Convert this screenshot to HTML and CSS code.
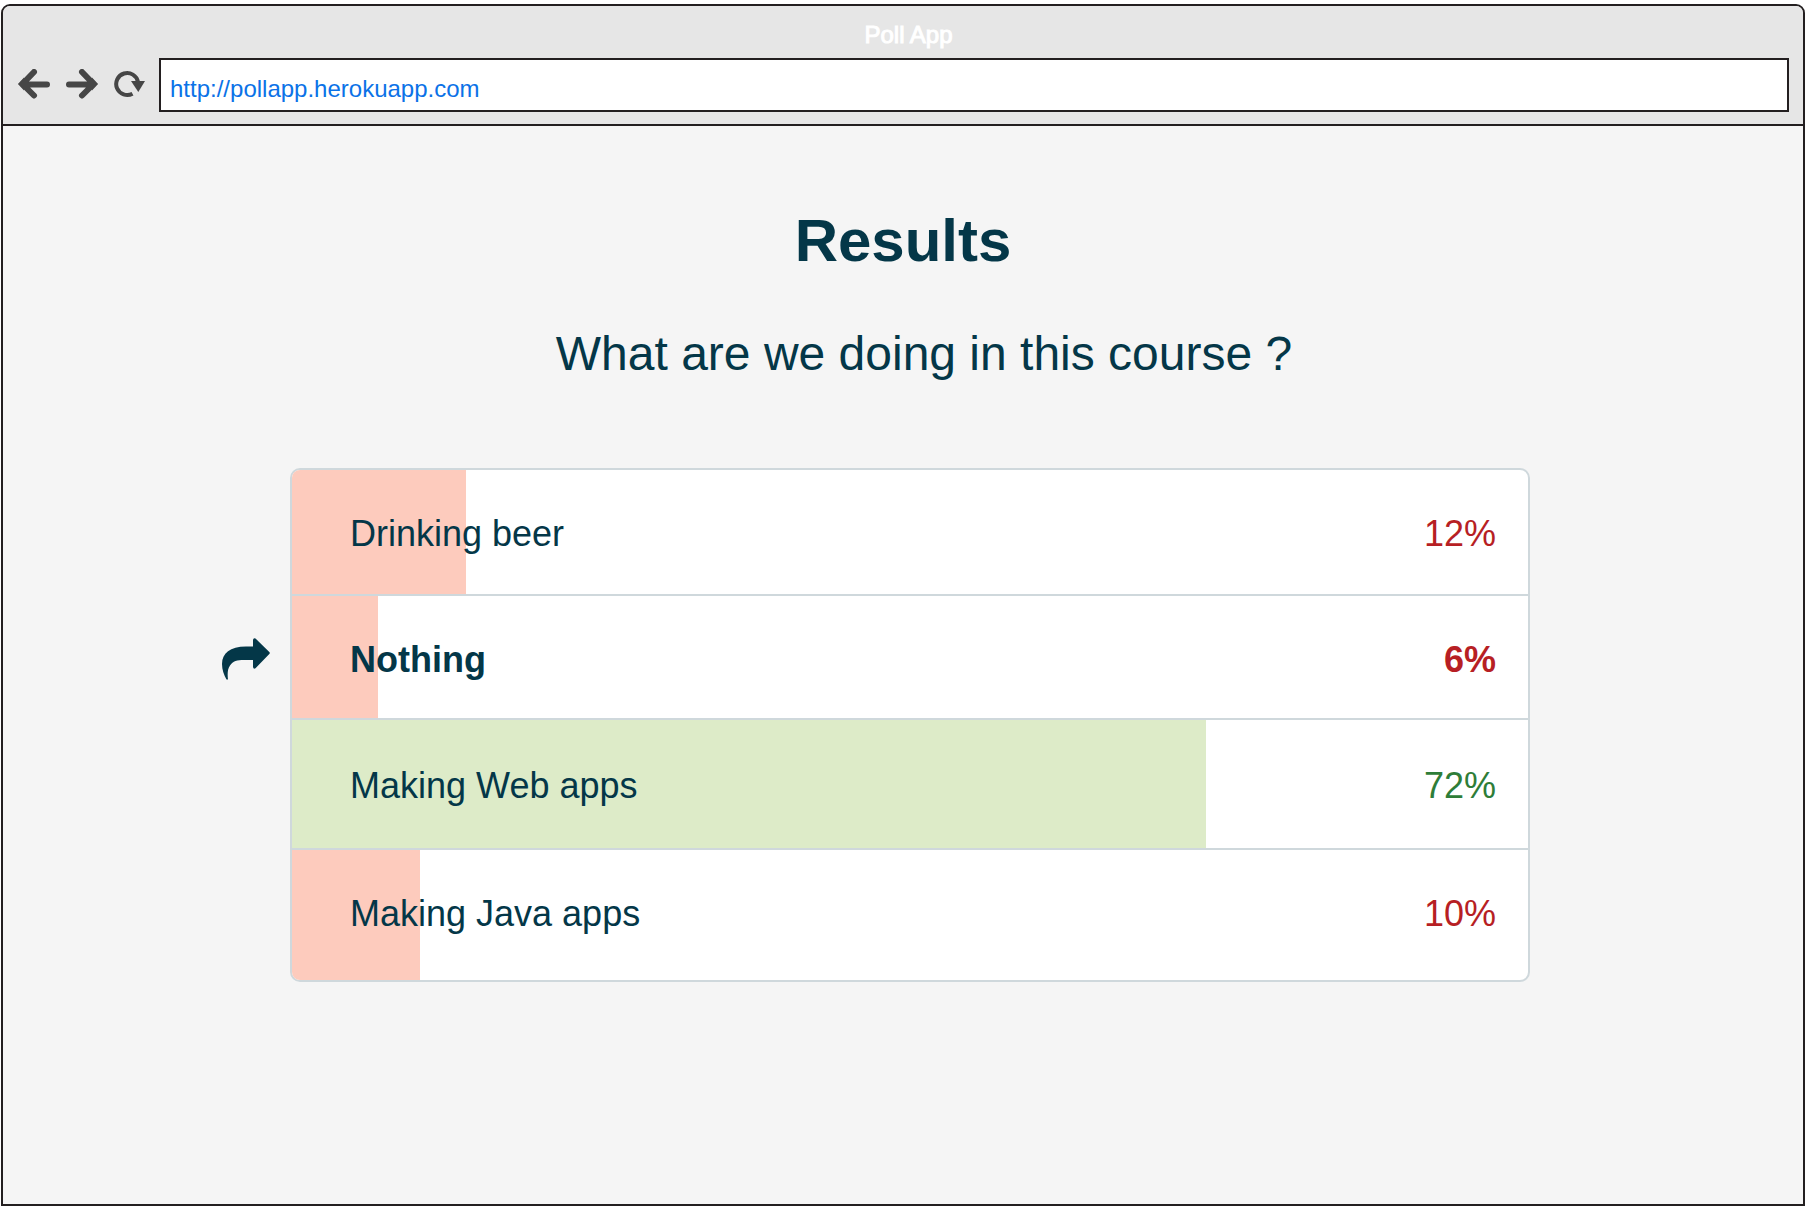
FILE: index.html
```html
<!DOCTYPE html>
<html lang="en">
<head>
<meta charset="utf-8">
<title>Poll App</title>
<link rel="stylesheet" href="styles.css">
</head>
<body>
<div class="window">
  <header class="chrome">
    <div class="window-title">Poll App</div>
    <div class="toolbar">
      <nav class="nav" aria-label="Browser">
        <button class="nav-button" type="button" aria-label="Back">
          <svg class="icon" viewBox="0 0 32 32"><path d="M8 15.500H29M16 3L4.500 15L16 26.500" fill="none" stroke="currentColor" stroke-width="6" stroke-linecap="round"/><path d="M0 15L6 8.500V21.500Z" fill="currentColor"/></svg>
        </button>
        <button class="nav-button" type="button" aria-label="Forward">
          <svg class="icon" viewBox="0 0 32 32"><path d="M24 15.500H3M16 3L27.500 15L16 26.500" fill="none" stroke="currentColor" stroke-width="6" stroke-linecap="round"/><path d="M32 15L26 8.500V21.500Z" fill="currentColor"/></svg>
        </button>
        <button class="nav-button" type="button" aria-label="Reload">
          <svg class="icon" viewBox="0 0 32 32"><path d="M24 13A11 11 0 1 0 18.500 24.700" fill="none" stroke="currentColor" stroke-width="4"/><path d="M17 12H31L24.300 23Z" fill="currentColor"/></svg>
        </button>
      </nav>
      <input class="address" type="text" aria-label="Address" value="http://pollapp.herokuapp.com">
    </div>
  </header>
  <main class="page">
    <h1 class="heading">Results</h1>
    <p class="question">What are we doing in this course ?</p>
    <ul class="results">
      <li class="result">
        <span class="bar" style="width: 14.08%"></span>
        <span class="label">Drinking beer</span>
        <span class="share">12%</span>
      </li>
      <li class="result result-chosen">
        <svg class="marker" viewBox="0 0 48 42" role="img" aria-label="Your answer"><path d="M31 8.500H24C8 8.500 0 15 0 26C0 32 2 37 4.500 41.500H6C5.300 36 5.500 31 8 27.500C11 23 15 22 22 22H31V29Q31.500 31.500 33.500 30.200L47.300 16Q48.300 15 47.300 14L33.500 .6Q31.500-.8 31 2Z" fill="currentColor"/></svg>
        <span class="bar" style="width: 6.96%"></span>
        <span class="label">Nothing</span>
        <span class="share">6%</span>
      </li>
      <li class="result result-correct">
        <span class="bar" style="width: 73.95%"></span>
        <span class="label">Making Web apps</span>
        <span class="share">72%</span>
      </li>
      <li class="result">
        <span class="bar" style="width: 10.36%"></span>
        <span class="label">Making Java apps</span>
        <span class="share">10%</span>
      </li>
    </ul>
  </main>
</div>
</body>
</html>
```
FILE: styles.css
```css
* {
  box-sizing: border-box;
}

body {
  margin: 0;
  padding: 4px 3px 2px 1px;
  background: #fff;
  color: #043748;
  font-family: "Liberation Sans", Arial, sans-serif;
}

.window {
  min-height: calc(100vh - 6px);
  border: 2px solid #231f20;
  border-radius: 9px 9px 0 0;
  background: #f5f5f5;
  overflow: hidden;
}

.chrome {
  padding: 13px 14px 12px 15px;
  border-bottom: 2px solid #231f20;
  background: #e6e6e6;
}

.window-title {
  padding-left: 10px;
  color: #fff;
  font-size: 24px;
  line-height: 32px;
  text-align: center;
  -webkit-text-stroke: 1px #fff;
}

.toolbar {
  display: flex;
  align-items: center;
  gap: 13px;
  margin-top: 7px;
}

.nav {
  display: flex;
  gap: 16px;
}

.nav-button {
  width: 32px;
  height: 32px;
  padding: 0;
  border: 0;
  background: none;
  color: #464646;
}

.icon {
  display: block;
  width: 32px;
  height: 32px;
}

.address {
  flex: 1;
  min-width: 0;
  height: 54px;
  padding: 8px 9px 0;
  border: 2px solid #231f20;
  border-radius: 0;
  background: #fff;
  color: #0b72e7;
  font: 24px "Liberation Sans", Arial, sans-serif;
}

.page {
  max-width: 1268px;
  margin: 0 auto;
  padding: 79px 0 64px;
}

.heading {
  margin: 0;
  font-size: 60px;
  line-height: 72px;
  text-align: center;
}

.question {
  margin: 49px 0 0;
  padding-left: 42px;
  font-size: 48px;
  line-height: 56px;
  text-align: center;
}

.results {
  margin: 86px 7px 0 21px;
  padding: 0;
  border: 2px solid #cfd8dc;
  border-radius: 10px;
  background: #fff;
  list-style: none;
}

.result {
  position: relative;
  display: flex;
  justify-content: space-between;
  padding: 44px 32px 40px 58px;
  border-bottom: 2px solid #cfd8dc;
  font-size: 36px;
  line-height: 40px;
}

.result:last-child {
  padding-bottom: 46px;
  border-bottom: 0;
}

.result-chosen {
  padding-bottom: 38px;
  font-weight: bold;
}

.result-correct {
  padding-top: 46px;
  padding-bottom: 42px;
}

.bar {
  position: absolute;
  top: 0;
  bottom: 0;
  left: 0;
  background: #fdcbbd;
}

.result:first-child .bar {
  border-top-left-radius: 8px;
}

.result:last-child .bar {
  border-bottom-left-radius: 8px;
}

.result-correct .bar {
  background: #ddebc8;
}

.label,
.share {
  position: relative;
}

.share {
  color: #b71f24;
}

.result-correct .share {
  color: #2e7d38;
}

.marker {
  position: absolute;
  top: 42px;
  left: -70px;
  width: 48px;
  height: 42px;
}
```
